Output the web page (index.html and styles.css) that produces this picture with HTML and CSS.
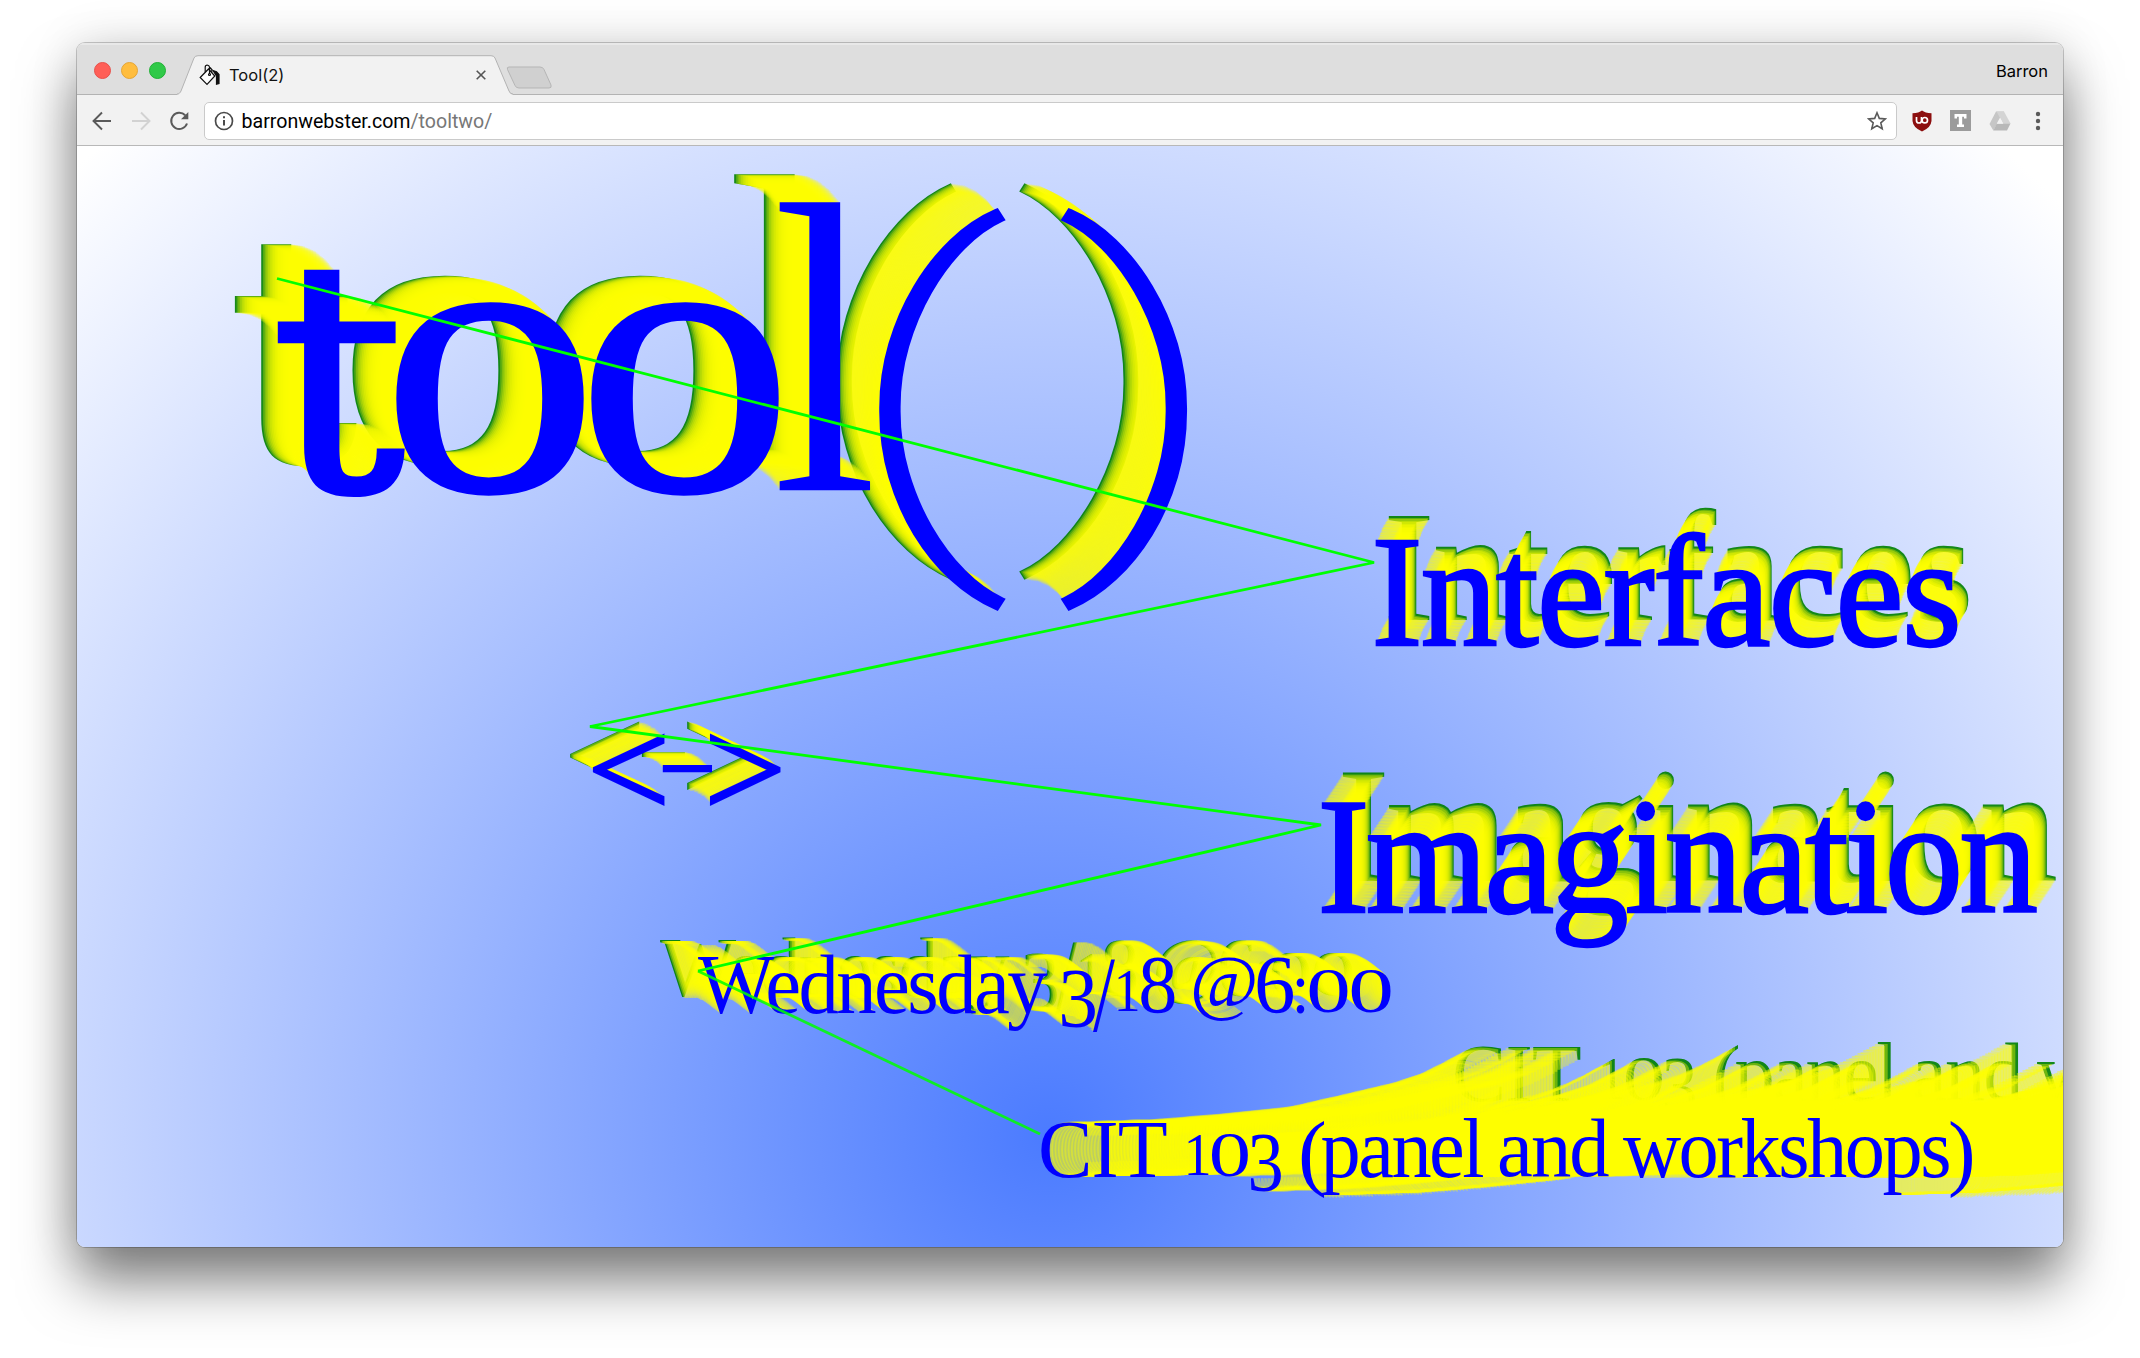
FILE: index.html
```html
<!DOCTYPE html>
<html lang="en">
<head>
<meta charset="utf-8">
<title>Tool(2)</title>
<link rel="stylesheet" href="styles.css">
</head>
<body>
<div class="window">
  <header class="tabbar">
    <div class="lights"><i class="light red"></i><i class="light amber"></i><i class="light green"></i></div>
    <div class="tab">
      <svg class="tab-shape" width="336" height="40" viewBox="0 0 336 40"><path d="M0 39.5 C2 39.5 3 38 4 36 L17 3 Q18 .7 21 .7 H314 Q317 .7 318 3 L332 36 Q333 39.5 336 39.5 V40 H0Z" fill="#f2f2f2"/><path d="M0 39 C2 39 3 38 4 36 L17 3 Q18 .7 21 .7 H314 Q317 .7 318 3 L332 36 Q333 39 336 39" fill="none" stroke="#b3b3b3"/></svg>
      <svg class="favicon" width="22" height="22" viewBox="0 0 22 22" fill="none" stroke="#111" stroke-width="1.200"><path d="M1.200 13.500 9.500 5 15.800 12 8 20.300Z" fill="#fff"/><path d="M6.200 8.300V3.200Q6.200 1.200 8.200 1.200T10.500 3.200V10M11 3.500 12.800 5.500V8.500"/><circle cx="10.500" cy="10.500" r="1"/><path d="M14 6.500 17.500 7.800 20 10.500V19.500L17.500 20.300V12Z" fill="#111"/></svg>
      <span class="tab-title">Tool(2)</span>
      <svg class="tab-close" width="10" height="10" viewBox="0 0 10 10"><path d="M.7.7 9.300 9.300M9.300.7.7 9.300" stroke="#555" stroke-width="1.600"/></svg>
    </div>
    <svg class="newtab" width="47" height="23" viewBox="0 0 47 23"><path d="M3 1H34Q37 1 38 3.500L45 19Q46 22 43 22H13Q10 22 9 19.500L1.500 3.500Q.5 1 3 1Z" fill="#d0d0d0" stroke="#b5b5b5"/></svg>
    <span class="profile">Barron</span>
  </header>
  <div class="toolbar">
    <svg class="nav" width="20" height="20" viewBox="0 0 20 20" fill="none" stroke="#5a5a5a" stroke-width="1.900"><path d="M19 10H2M10 1.500 1.500 10 10 18.500"/></svg>
    <svg class="nav" width="20" height="20" viewBox="0 0 20 20" fill="none" stroke="#d2d2d2" stroke-width="1.900"><path d="M1 10H18M10 1.500 18.500 10 10 18.500"/></svg>
    <svg class="nav" width="20" height="20" viewBox="0 0 20 20"><path d="M16.200 4.300A8.100 8.100 0 1 0 18 12.500" fill="none" stroke="#5a5a5a" stroke-width="2"/><path d="M19.300 1V8.300H12Z" fill="#5a5a5a"/></svg>
    <div class="omnibox">
      <svg width="20" height="20" viewBox="0 0 20 20" fill="none" stroke="#4a4a4a" stroke-width="1.700"><circle cx="10" cy="10" r="8.500"/><path d="M10 9V14.500M10 5.300V7.300" stroke-width="2"/></svg>
      <span class="url">barronwebster.com<span class="path">/tooltwo/</span></span>
      <svg class="star" width="20" height="20" viewBox="0 0 20 20" fill="none" stroke="#5a5a5a" stroke-width="1.600"><path d="M10 1.800 12.300 7.400 18.400 7.900 13.800 11.800 15.200 17.800 10 14.600 4.800 17.800 6.200 11.800 1.600 7.900 7.700 7.400Z"/></svg>
    </div>
    <svg class="ext" width="20" height="22" viewBox="0 0 20 22"><path d="M10 .5Q13 3 19.500 3.200V11Q19 17.500 10 21.500 1 17.500 .5 11V3.200Q7 3 10 .5Z" fill="#8c0f0f"/><path d="M4.500 7V10.500Q4.500 13 7 13T9.500 10.500V7" fill="none" stroke="#fff" stroke-width="1.700"/><circle cx="12.800" cy="10.200" r="2.700" fill="none" stroke="#fff" stroke-width="1.700"/></svg>
    <svg class="ext" width="21" height="21" viewBox="0 0 21 21"><path d="M0 0H21V21H0Z" fill="#9b9b9b"/><path d="M4.500 4H16.500V8.500H14V6.800H12.200V14.500H14V17H7V14.500H8.800V6.800H7V8.500H4.500Z" fill="#fff"/></svg>
    <svg class="ext" width="22" height="20" viewBox="0 0 22 20"><path d="M7 .5H15L11 7.500 4.300 19.500.5 13Z" fill="#c6c6c6"/><path d="M15 .5 21.500 12.500H14L7.500.5Z" fill="#d4d4d4"/><path d="M7.800 12.500H21.500L18 19.500H4.300Z" fill="#b8b8b8"/><path d="M11 6.800 14.300 12.800H7.700Z" fill="#f2f2f2"/></svg>
    <svg class="menu" width="6" height="20" viewBox="0 0 6 20" fill="#5a5a5a"><circle cx="3" cy="3" r="2.200"/><circle cx="3" cy="10" r="2.200"/><circle cx="3" cy="17" r="2.200"/></svg>
  </div>
  <main class="page">
    <div class="poster">
      <h1 class="line back" data-trail="title">
        <span class="t" data-box="276,270,406,495">t</span>
        <span class="o" data-box="395,299,585,497">o</span>
        <span class="o" data-box="590,299,780,497">o</span>
        <span data-box="778,199,873,491">l</span>
        <span class="paren" data-box="877,210,1009,610">(</span>
        <span class="paren" data-box="1057,210,1189,610">)</span>
      </h1>
      <h2 class="line heavy" data-trail="interfaces"><span data-box="1376,533,1957,650">Interfaces</span></h2>
      <p class="line back heavy" data-trail="arrow">
        <span data-box="594,735,664,806">&lt;</span>
        <span data-box="665,766,709,772">-</span>
        <span data-box="711,735,780,806">&gt;</span>
      </p>
      <h2 class="line heavy" data-trail="imagination"><span data-box="1323,802,2036,950">Imagination</span></h2>
      <p class="line back" data-trail="date">
        <span data-box="698,955,1048,1033.500">Wednesday</span>
        <span data-box="1062,971,1095,1029">3</span>
        <span data-box="1093,959,1115,1033">/</span>
        <span data-box="1118,971.500,1138,1013">1</span>
        <span data-box="1141,957,1175,1014">8</span>
        <span data-box="1193,957,1255,1021">@</span>
        <span data-box="1257,957,1293,1014">6</span>
        <span data-box="1296,978,1305,1014">:</span>
        <span data-box="1309,970,1348,1014">0</span>
        <span data-box="1351,970,1391,1014">0</span>
      </p>
      <p class="line" data-trail="room">
        <span data-box="1041,1122,1167,1179">CIT</span>
        <span data-box="1188,1136,1209,1177.500">1</span>
        <span data-box="1211.500,1135,1249,1178.500">0</span>
        <span data-box="1251,1135,1281,1193">3</span>
        <span data-box="1301,1122,1324.500,1200">(</span>
        <span data-box="1321.500,1119,1483,1197.500">panel</span>
        <span data-box="1499,1119,1609,1179">and</span>
        <span data-box="1623,1119,1949.500,1197.500">workshops</span>
        <span data-box="1950,1122,1972.500,1200">)</span>
      </p>
      <svg class="thread" width="2140" height="1358" viewBox="0 0 2140 1358"><polyline points="277,278.500 1374,562.500 590,726.500 1321,825 698,971"/><path d="M698 971 1040 1134" opacity=".85"/></svg>
    </div>
  </main>
</div>
<script src="poster.js"></script>
</body>
</html>
```
FILE: styles.css
```css
* { box-sizing: border-box; }
html { background: #fff; }
body { margin: 0; height: 1358px; padding: 43px 77px 0; overflow: hidden; font-family: Inter, "Liberation Sans", sans-serif; }
.window {
  display: flex; flex-direction: column; width: 1986px; height: 1204px;
  border-radius: 8px; overflow: hidden;
  box-shadow: 0 0 0 1px rgba(0,0,0,.2), 0 34px 56px rgba(0,0,0,.5), 0 0 50px rgba(0,0,0,.12);
}
.tabbar { display: flex; height: 52px; flex: none; background: #dedede; border-bottom: 1px solid #b3b3b3; box-shadow: inset 0 2px 0 #e8e8e8; padding-left: 16.500px; }
.lights { display: flex; gap: 10.500px; padding-top: 19px; width: 83.500px; flex: none; }
.light { width: 17px; height: 17px; border-radius: 50%; }
.red { background: #ff5f57; border: 1px solid #e8504a; }
.amber { background: #ffbd3e; border: 1px solid #e5a535; }
.green { background: #30c948; border: 1px solid #20b135; }
.tab { display: grid; grid-template-columns: 22px 1fr 10px; column-gap: 8px; align-items: center; position: relative; width: 336px; height: 40px; margin-top: 12px; padding: 0 27px 1px 22px; flex: none; }
.tab-shape { position: absolute; left: 0; top: 0; }
.favicon, .tab-title, .tab-close { position: relative; }
.tab-title { font-size: 16.500px; line-height: 20px; color: #111; }
.newtab { margin: 23px 0 0 -7px; flex: none; }
.profile { margin: 18px 15px 0 auto; font-size: 16.500px; line-height: 20px; color: #000; }
.toolbar { display: flex; align-items: center; height: 51px; flex: none; background: #f2f2f2; border-bottom: 1px solid #b8b8b8; padding: 1px 22px 0 15px; }
.nav { margin-right: 18.500px; flex: none; }
.nav:nth-child(3) { margin-right: 15px; }
.omnibox { display: flex; align-items: center; flex: 1; height: 38px; border: 1px solid #cacaca; border-radius: 5px; background: #fff; padding: 0 9px; margin-right: 15px; }
.url { margin: 1px 0 0 7.500px; font: 19.600px Roboto, sans-serif; color: #000; }
.path { color: #777; }
.star { margin-left: auto; }
.ext { margin-right: 18px; flex: none; }
.menu { margin-left: 6px; flex: none; }

.page { position: relative; flex: 1; overflow: hidden; background: radial-gradient(ellipse at 49% 90%, #4b7bff, #fff 97%); }
.poster { position: absolute; left: -77px; top: -146px; width: 2140px; height: 1358px; }
.line { margin: 0; font-weight: 400; color: #00f; font-family: "Liberation Serif", serif; }
.line span { position: absolute; left: 0; top: 0; line-height: 1; white-space: nowrap; transform-origin: 0 0; }
.heavy span { -webkit-text-stroke: 2.400px #00f; }
.line .o { -webkit-text-stroke: 3px #00f; }
.line .paren { font-family: Roboto, sans-serif; font-weight: 100; -webkit-text-stroke: 4.500px #00f; }
.line .t { font-family: "DejaVu Serif", serif; -webkit-text-stroke: 5px #00f; }
.thread { position: absolute; left: 0; top: 0; z-index: 50; fill: none; stroke: #0f0; stroke-width: 2.800; }
```
FILE: poster.js
```js
// Each trail is a list of points from the lettering outward, with a step count and an opacity.
const trails = {
  title:       { pts: [[0,0],[-11,-13],[-21,-21],[-32,-26],[-45.5,-28]], n: 32, a: 0.26 },
  interfaces:  { pts: [[0,0],[6,-15],[12,-25]], n: 16, a: 0.34 },
  arrow:       { pts: [[0,0],[-9,-8],[-16,-12],[-24,-14]], n: 20, a: 0.36 },
  imagination: { pts: [[0,0],[20,-30.5]], n: 20, a: 0.3 },
  date:        { pts: [[0,0],[-12,-10],[-22,-16],[-38,-17]], n: 26, a: 0.36 },
  room:        { pts: [[0,0],[90,-3],[150,-8],[228,-16],[298,-32],[340,-42],[368,-52],[388,-62],[414,-76]], n: 130, a: 0.38 }
};

function along(pts, u) {
  const seg = pts.slice(1).map((p, i) => Math.hypot(p[0] - pts[i][0], p[1] - pts[i][1]));
  let d = u * seg.reduce((s, v) => s + v, 0);
  for (let i = 0; i < seg.length; i++) {
    if (d <= seg[i] || i === seg.length - 1) {
      const k = Math.min(1, d / seg[i]);
      return [0, 1].map(j => pts[i][j] + (pts[i + 1][j] - pts[i][j]) * k);
    }
    d -= seg[i];
  }
}

function shadow(trail, sx) {
  const out = [];
  for (let i = 1; i < trail.n; i++) {
    const [x, y] = along(trail.pts, i / trail.n);
    out.push(`${(x / sx).toFixed(2)}px ${y.toFixed(2)}px rgba(255,255,0,${trail.a})`);
  }
  const [x, y] = trail.pts[trail.pts.length - 1];
  out.push(`${(x / sx).toFixed(2)}px ${y}px rgba(0,128,0,.9)`);
  return out.join(",");
}

const ctx = document.createElement("canvas").getContext("2d");

document.querySelectorAll(".line").forEach(line => {
  const spans = [...line.querySelectorAll("span")];
  spans.forEach((el, i) => {
    const [x0, y0, x1, y1] = el.dataset.box.split(",").map(Number);
    const style = getComputedStyle(el);
    const text = el.textContent;
    const measure = size => {
      ctx.font = `${style.fontWeight} ${size}px ${style.fontFamily}`;
      return ctx.measureText(text);
    };
    const ref = measure(400);
    const size = 400 * (y1 - y0) / (ref.actualBoundingBoxAscent + ref.actualBoundingBoxDescent);
    const m = measure(size);
    const ink = m.actualBoundingBoxRight + m.actualBoundingBoxLeft;
    let sx = (x1 - x0) / ink;
    if (text.length > 1) {
      sx = (1 + sx) / 2;
      el.style.letterSpacing = ((x1 - x0) / sx - ink) / (text.length - 1) + "px";
    }
    const baseline = size / 2 + (m.fontBoundingBoxAscent - m.fontBoundingBoxDescent) / 2;
    const tx = x0 + sx * m.actualBoundingBoxLeft;
    const ty = y0 + m.actualBoundingBoxAscent - baseline;
    el.style.fontSize = size + "px";
    el.style.transform = `translate(${tx}px,${ty}px) scale(${sx},1)`;
    el.style.textShadow = shadow(trails[line.dataset.trail], sx);
    if (line.classList.contains("back")) el.style.zIndex = spans.length - i;
  });
});
```
